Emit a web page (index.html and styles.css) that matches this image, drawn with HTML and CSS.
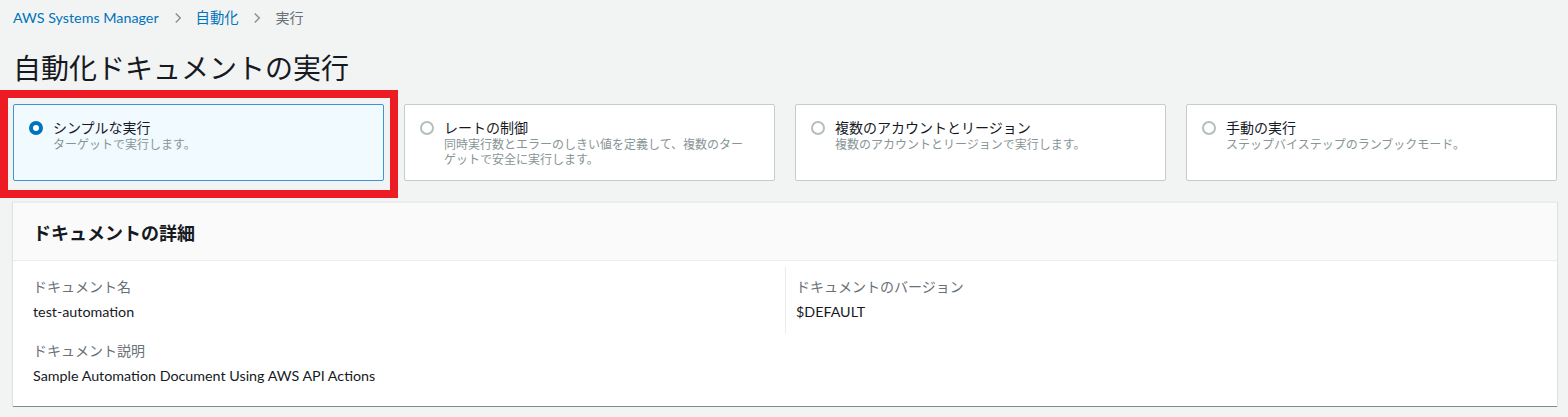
FILE: index.html
```html
<!DOCTYPE html>
<html lang="ja">
<head>
<meta charset="utf-8">
<title>自動化ドキュメントの実行</title>
<link rel="stylesheet" href="styles.css">
</head>
<body>
<div class="page">
  <nav class="crumbs">
    <a class="crumb-link">AWS Systems Manager</a>
    <svg class="chev" viewBox="0 0 16 16" width="16" height="16"><path d="M5 2l6 6-6 6" fill="none" stroke="#879596" stroke-width="2"/></svg>
    <a class="crumb-link">自動化</a>
    <svg class="chev" viewBox="0 0 16 16" width="16" height="16"><path d="M5 2l6 6-6 6" fill="none" stroke="#879596" stroke-width="2"/></svg>
    <span class="crumb-current">実行</span>
  </nav>

  <h1 class="title">自動化ドキュメントの実行</h1>

  <div class="tiles">
    <div class="tile selected">
      <span class="radio on"></span>
      <div class="tile-text">
        <div class="tile-label">シンプルな実行</div>
        <div class="tile-desc">ターゲットで実行します。</div>
      </div>
      <div class="highlight"></div>
    </div>
    <div class="tile">
      <span class="radio"></span>
      <div class="tile-text">
        <div class="tile-label">レートの制御</div>
        <div class="tile-desc">同時実行数とエラーのしきい値を定義して、複数のターゲットで安全に実行します。</div>
      </div>
    </div>
    <div class="tile">
      <span class="radio"></span>
      <div class="tile-text">
        <div class="tile-label">複数のアカウントとリージョン</div>
        <div class="tile-desc">複数のアカウントとリージョンで実行します。</div>
      </div>
    </div>
    <div class="tile">
      <span class="radio"></span>
      <div class="tile-text">
        <div class="tile-label">手動の実行</div>
        <div class="tile-desc">ステップバイステップのランブックモード。</div>
      </div>
    </div>
  </div>

  <section class="panel">
    <header class="panel-head">
      <h2>ドキュメントの詳細</h2>
    </header>
    <div class="panel-body">
      <div class="cols">
        <div class="col">
          <div class="field">
            <div class="f-label">ドキュメント名</div>
            <div class="f-value">test-automation</div>
          </div>
          <div class="field">
            <div class="f-label">ドキュメント説明</div>
            <div class="f-value">Sample Automation Document Using AWS API Actions</div>
          </div>
        </div>
        <div class="col col-2">
          <div class="field divided">
            <div class="f-label">ドキュメントのバージョン</div>
            <div class="f-value">$DEFAULT</div>
          </div>
        </div>
      </div>
    </div>
  </section>
</div>
</body>
</html>
```

FILE: styles.css
```css
* { box-sizing: border-box; }
html, body { margin: 0; padding: 0; }
body {
  background: #f2f3f3;
  font-family: "Lato", "Noto Sans CJK JP", sans-serif;
  color: #16191f;
  font-size: 14px;
}
.page {
  padding: 0 11px 0 13px;
}
.crumbs {
  display: flex;
  align-items: center;
  height: 36px;
  line-height: 20px;
}
.crumb-link { color: #0073bb; font-size: 14.3px; }
.crumb-current { color: #687078; }
.chev { margin: 0 12px 0 13px; width: 12px; height: 14px; }
.title {
  margin: 14px 0 0;
  font-size: 28px;
  font-weight: 400;
  line-height: 36px;
  height: 54px;
}
.tiles {
  display: grid;
  grid-template-columns: repeat(4, 1fr);
  column-gap: 20px;
}
.tile {
  position: relative;
  display: flex;
  align-items: flex-start;
  height: 77px;
  background: #fff;
  border: 1px solid #c6cbcb;
  border-radius: 2px;
  padding: 14px 20px 0 15px;
}
.tile.selected {
  background: #f1faff;
  border-color: #3f94d6;
}
.radio {
  flex: none;
  width: 14px;
  height: 14px;
  border-radius: 50%;
  border: 2px solid #b4bebf;
  background: #fff;
  margin-top: 2px;
  margin-right: 10px;
}
.radio.on { border: 4px solid #0073bb; }
.tile-text { flex: 1; }
.tile-label { font-size: 14px; line-height: 18px; color: #16191f; }
.tile-desc { font-size: 12px; line-height: 15px; color: #879596; }
.highlight {
  position: absolute;
  left: -14px; top: -15px; right: -15px; bottom: -18px;
  border: 8px solid #ed1c24;
  pointer-events: none;
}
.panel {
  margin-top: 21px;
  background: #fff;
  border-top: 1px solid #eaeded;
  border-bottom: 1px solid #7d8c8d;
  box-shadow: 1px 0 1px 0 rgba(0,28,36,.08), -1px 0 1px 0 rgba(0,28,36,.08), 0 1px 0 0 rgba(0,28,36,.15);
}
.panel-head {
  background: #fafafa;
  border-bottom: 1px solid #eaeded;
  height: 58px;
  padding: 0 20px;
  display: flex;
  align-items: center;
}
.panel-head h2 {
  margin: 0;
  font-size: 18px;
  font-weight: 700;
}
.panel-body {
  padding: 6px 20px 20px;
}
.cols {
  display: grid;
  grid-template-columns: 1fr 1fr;
}
.field { padding-top: 10px; }
.field + .field { padding-top: 19px; }
.col-2 .field { padding-left: 10px; }
.divided { border-left: 1px solid #eaeded; padding-bottom: 12px; }
.f-label { color: #687078; line-height: 20px; margin-bottom: 5px; }
.f-value { color: #16191f; line-height: 20px; font-size: 14.3px; }
```
